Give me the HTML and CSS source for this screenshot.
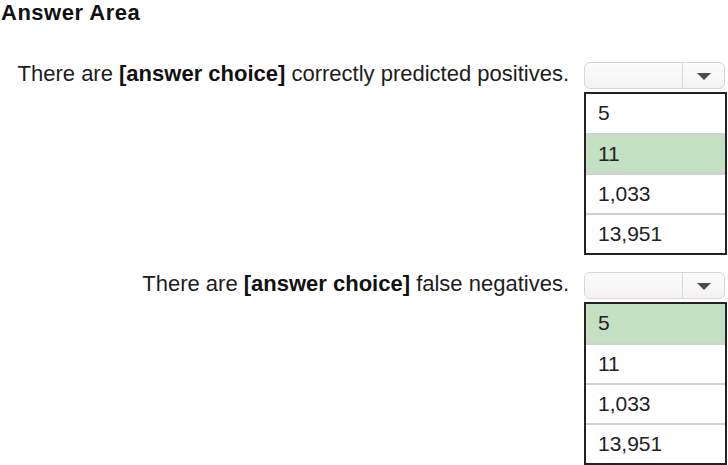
FILE: index.html
```html
<!DOCTYPE html>
<html>
<head>
<meta charset="utf-8">
<link rel="stylesheet" href="styles.css">
</head>
<body>
<h1 class="title">Answer Area</h1>
<div class="question q1">
  <div class="label">There are <b>[answer choice]</b> correctly predicted positives.</div>
  <div class="dropdown">
    <div class="select"><span class="field"></span><span class="arrowbox"><span class="arrow"></span></span></div>
    <ul class="list">
      <li>5</li>
      <li class="selected">11</li>
      <li>1,033</li>
      <li>13,951</li>
    </ul>
  </div>
</div>
<div class="question q2">
  <div class="label">There are <b>[answer choice]</b> false negatives.</div>
  <div class="dropdown">
    <div class="select"><span class="field"></span><span class="arrowbox"><span class="arrow"></span></span></div>
    <ul class="list">
      <li class="selected">5</li>
      <li>11</li>
      <li>1,033</li>
      <li>13,951</li>
    </ul>
  </div>
</div>
</body>
</html>
```
FILE: styles.css
```css
html, body {
  margin: 0;
  padding: 0;
  background: #fff;
}
body {
  font-family: "Liberation Sans", Arial, sans-serif;
  color: #1a1a1a;
  width: 728px;
  height: 465px;
  overflow: hidden;
}
.title {
  margin: 0;
  padding: 0 0 0 1px;
  font-size: 22px;
  line-height: 25px;
  font-weight: bold;
  color: #111;
  letter-spacing: 0.5px;
}
.question {
  display: flex;
  align-items: flex-start;
}
.q1 { margin-top: 37px; }
.q2 { margin-top: 17px; }
.label {
  flex: 1;
  text-align: right;
  padding-right: 15px;
  font-size: 22px;
  line-height: 24px;
  height: 26px;
  color: #1d1d1d;
}
.label b {
  color: #111;
}
.dropdown {
  width: 143px;
  margin-right: 1px;
  display: flex;
  flex-direction: column;
}
.select {
  width: 139px;
  height: 25px;
  border: 1px solid #d6d6d6;
  border-radius: 6px;
  background: linear-gradient(#fbfbfb, #f6f2f3);
  display: flex;
}
.field {
  flex: 1;
}
.arrowbox {
  width: 41px;
  border-left: 1px solid #d8d8d8;
  display: flex;
  align-items: center;
  justify-content: center;
}
.arrow {
  width: 0;
  height: 0;
  border-left: 7px solid transparent;
  border-right: 7px solid transparent;
  border-top: 7px solid #4a4a4a;
  margin-top: 2px;
}
.list {
  list-style: none;
  margin: 3px 0 0 0;
  padding: 0;
  border: 2px solid #222;
  background: #fff;
}
.list li {
  height: 38px;
  line-height: 37px;
  padding-left: 12px;
  font-size: 21px;
  color: #222;
  border-top: 2px solid #d0d0d0;
}
.list li:first-child {
  border-top: none;
  height: 39px;
}
.list li.selected {
  background: #c4e0c3;
}
```
